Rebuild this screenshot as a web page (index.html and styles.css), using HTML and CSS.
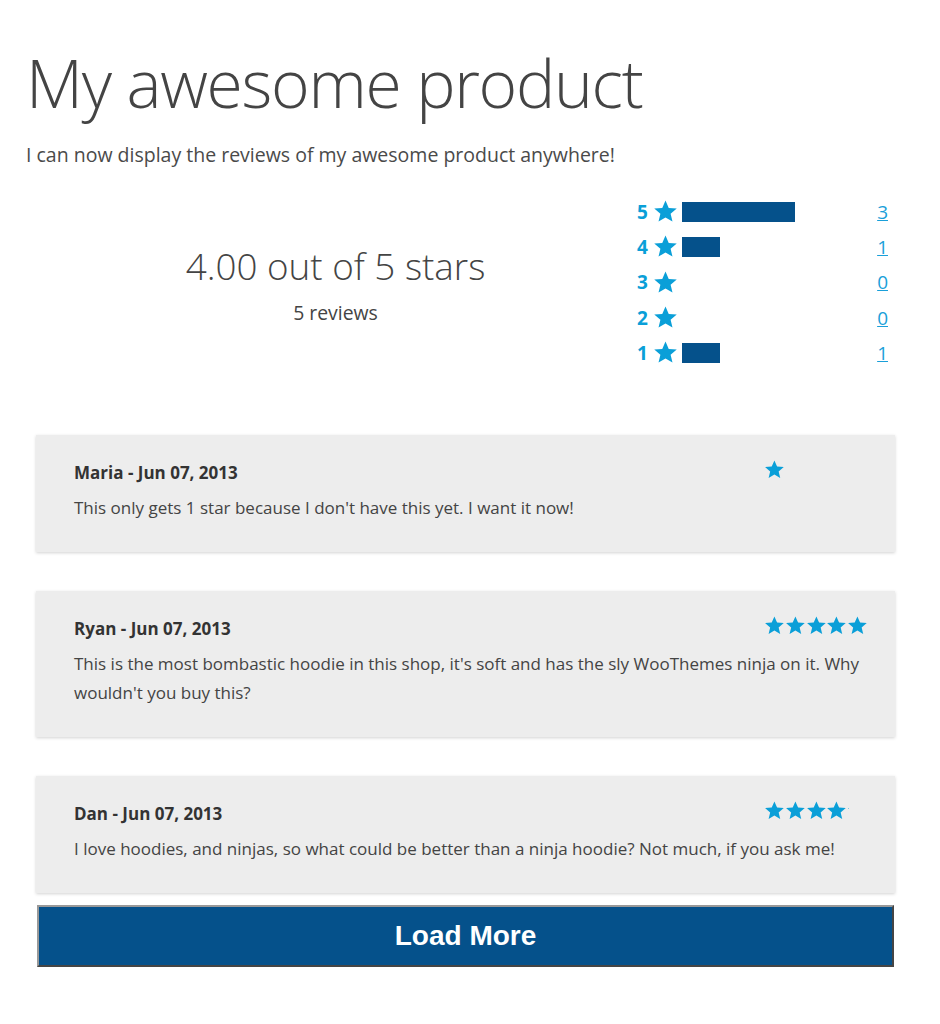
FILE: index.html
```html
<!DOCTYPE html>
<html>
<head>
    <meta charset="utf-8">
    <title>My awesome product</title>
    <link rel="stylesheet" href="styles.css">
</head>
<body>
    <svg width="0" height="0" class="defs">
        <defs>
            <symbol id="star" viewBox="0 0 24 24">
                <path d="M12 1.5l3.1 7.1 7.7.6-5.9 5 1.8 7.5L12 17.7l-6.7 4 1.8-7.5-5.9-5 7.7-.6z"/>
            </symbol>
        </defs>
    </svg>

    <div id="page">
        <h1 class="title">My awesome product</h1>
        <p class="intro">I can now display the reviews of my awesome product anywhere!</p>

        <div class="summary">
            <div class="average">
                <div class="average-score">4.00 out of 5 stars</div>
                <div class="average-count">5 reviews</div>
            </div>
            <div class="histogram">
                <div class="hist-row">
                    <span class="hist-num">5</span>
                    <svg class="hist-star"><use href="#star"/></svg>
                    <div class="hist-track"><div class="hist-bar" style="width: 60%"></div></div>
                    <a href="#" class="hist-count">3</a>
                </div>
                <div class="hist-row">
                    <span class="hist-num">4</span>
                    <svg class="hist-star"><use href="#star"/></svg>
                    <div class="hist-track"><div class="hist-bar" style="width: 20%"></div></div>
                    <a href="#" class="hist-count">1</a>
                </div>
                <div class="hist-row">
                    <span class="hist-num">3</span>
                    <svg class="hist-star"><use href="#star"/></svg>
                    <div class="hist-track"><div class="hist-bar" style="width: 0%"></div></div>
                    <a href="#" class="hist-count">0</a>
                </div>
                <div class="hist-row">
                    <span class="hist-num">2</span>
                    <svg class="hist-star"><use href="#star"/></svg>
                    <div class="hist-track"><div class="hist-bar" style="width: 0%"></div></div>
                    <a href="#" class="hist-count">0</a>
                </div>
                <div class="hist-row">
                    <span class="hist-num">1</span>
                    <svg class="hist-star"><use href="#star"/></svg>
                    <div class="hist-track"><div class="hist-bar" style="width: 20%"></div></div>
                    <a href="#" class="hist-count">1</a>
                </div>
            </div>
        </div>

        <div class="reviews">
            <div class="review">
                <div class="review-head">
                    <span class="review-author">Maria - Jun 07, 2013</span>
                    <div class="rating"><div class="rating-fill" style="width: 21px">
                        <svg><use href="#star"/></svg><svg><use href="#star"/></svg><svg><use href="#star"/></svg><svg><use href="#star"/></svg><svg><use href="#star"/></svg>
                    </div></div>
                </div>
                <p class="review-text">This only gets 1 star because I don't have this yet. I want it now!</p>
            </div>
            <div class="review">
                <div class="review-head">
                    <span class="review-author">Ryan - Jun 07, 2013</span>
                    <div class="rating"><div class="rating-fill" style="width: 104px">
                        <svg><use href="#star"/></svg><svg><use href="#star"/></svg><svg><use href="#star"/></svg><svg><use href="#star"/></svg><svg><use href="#star"/></svg>
                    </div></div>
                </div>
                <p class="review-text">This is the most bombastic hoodie in this shop, it's soft and has the sly WooThemes ninja on it. Why wouldn't you buy this?</p>
            </div>
            <div class="review">
                <div class="review-head">
                    <span class="review-author">Dan - Jun 07, 2013</span>
                    <div class="rating"><div class="rating-fill" style="width: 85px">
                        <svg><use href="#star"/></svg><svg><use href="#star"/></svg><svg><use href="#star"/></svg><svg><use href="#star"/></svg><svg><use href="#star"/></svg>
                    </div></div>
                </div>
                <p class="review-text">I love hoodies, and ninjas, so what could be better than a ninja hoodie? Not much, if you ask me!</p>
            </div>
        </div>

        <button class="load-more">Load More</button>
    </div>
</body>
</html>
```

FILE: styles.css
```css
html {
    font-family: "Open Sans", "Liberation Sans", sans-serif;
    color: #444;
}
body {
    margin: 0;
    background-color: #fff;
}
.defs {
    position: absolute;
}
#page {
    width: 888px;
    padding: 0 0 0 26px;
}
.title {
    margin: 40px 0 0 0;
    font-size: 66px;
    font-weight: 300;
    letter-spacing: -1.3px;
    line-height: 84px;
    color: #444;
}
.intro {
    margin: 17px 0 0 0;
    font-size: 19.5px;
    line-height: 28px;
    color: #4a4a4a;
}

/* summary */
.summary {
    display: flex;
    margin-top: 25px;
}
.average {
    width: 603px;
    padding-left: 8px;
    padding-top: 47px;
    text-align: center;
}
.average-score {
    font-size: 36.8px;
    font-weight: 300;
    line-height: 50px;
}
.average-count {
    font-size: 19.4px;
    line-height: 30px;
    margin-top: 7px;
}
.histogram {
    width: 251px;
}
.hist-row {
    display: flex;
    align-items: center;
    height: 35.3px;
}
.hist-num {
    width: 16px;
    font-size: 19px;
    font-weight: 700;
    color: #0a9fd8;
}
.hist-star {
    width: 25px;
    height: 25px;
    fill: #0a9fd8;
}
.hist-track {
    width: 188px;
    height: 20px;
    margin-left: 4px;
}
.hist-bar {
    height: 100%;
    background-color: #05518b;
}
.hist-count {
    margin-left: auto;
    font-size: 19px;
    color: #1a9fd9;
}

/* reviews */
.reviews {
    margin-top: 65px;
    margin-left: 10px;
    width: 859px;
}
.review {
    background-color: #ededed;
    box-shadow: 0 1px 3px rgba(0, 0, 0, 0.18);
    padding: 24px 29px 30px 38px;
    margin-bottom: 39px;
}
.review:last-child {
    margin-bottom: 0;
}
.review-head {
    display: flex;
    justify-content: space-between;
    align-items: center;
}
.review-author {
    font-size: 17px;
    font-weight: 700;
    line-height: 27px;
    color: #333;
}
.rating {
    width: 104px;
    height: 21px;
    margin-top: -6px;
    margin-right: -2px;
}
.rating-fill {
    height: 21px;
    overflow: hidden;
    display: flex;
}
.rating-fill svg {
    flex: none;
    width: 20.8px;
    height: 21px;
    fill: #0a9fd8;
}
.review-text {
    margin: 7px 0 0 0;
    font-size: 17px;
    line-height: 29px;
}

.load-more {
    display: block;
    width: 857px;
    height: 62px;
    margin: 12px 0 0 11px;
    background-color: #05518b;
    border: 2px outset #999;
    color: #fff;
    font-family: "Liberation Sans", Arial, sans-serif;
    font-size: 28px;
    font-weight: 700;
    cursor: pointer;
}
```
